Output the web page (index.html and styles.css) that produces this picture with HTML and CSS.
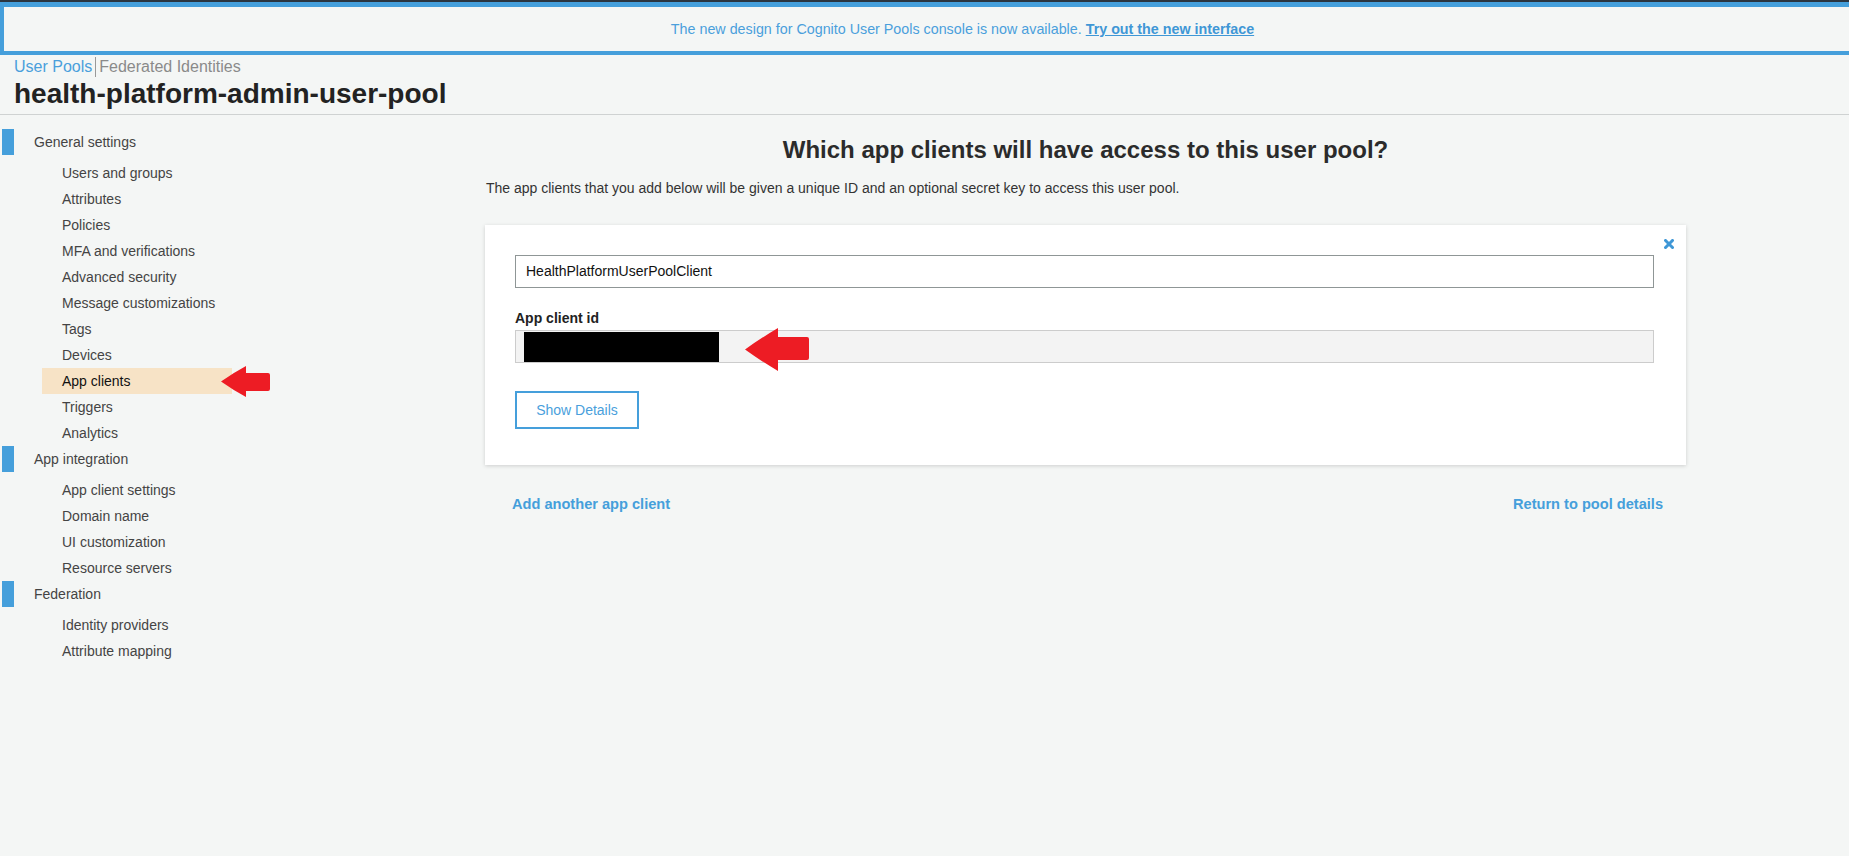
FILE: index.html
```html
<!DOCTYPE html>
<html>
<head>
<meta charset="utf-8">
<title>Cognito User Pool</title>
<link rel="stylesheet" href="styles.css">
</head>
<body>
<div class="topstrip"></div>
<div class="banner">The new design for Cognito User Pools console is now available. <a class="banner-link">Try out the new interface</a></div>
<header class="pagehead">
  <div class="crumbs"><a class="crumb-active">User Pools</a><span class="crumb-sep">Federated Identities</span></div>
  <h1 class="pool-title">health-platform-admin-user-pool</h1>
</header>
<div class="layout">
  <nav class="sidebar">
    <div class="group-head">General settings</div>
    <ul class="sub-list">
      <li class="sub-item">Users and groups</li>
      <li class="sub-item">Attributes</li>
      <li class="sub-item">Policies</li>
      <li class="sub-item">MFA and verifications</li>
      <li class="sub-item">Advanced security</li>
      <li class="sub-item">Message customizations</li>
      <li class="sub-item">Tags</li>
      <li class="sub-item">Devices</li>
      <li class="sub-item active">App clients
        <svg class="side-arrow" width="49" height="31" viewBox="0 0 49 31"><path d="M0 15.5 Q12 7 25 0 L25 7 L47 7 Q49 7 49 9 L49 23 Q49 25 47 25 L25 25 L25 31 Q12 24 0 15.5 Z" fill="#ed1c24"/></svg>
      </li>
      <li class="sub-item">Triggers</li>
      <li class="sub-item">Analytics</li>
    </ul>
    <div class="group-head">App integration</div>
    <ul class="sub-list">
      <li class="sub-item">App client settings</li>
      <li class="sub-item">Domain name</li>
      <li class="sub-item">UI customization</li>
      <li class="sub-item">Resource servers</li>
    </ul>
    <div class="group-head">Federation</div>
    <ul class="sub-list">
      <li class="sub-item">Identity providers</li>
      <li class="sub-item">Attribute mapping</li>
    </ul>
  </nav>
  <main class="content">
    <h2 class="content-title">Which app clients will have access to this user pool?</h2>
    <p class="content-intro">The app clients that you add below will be given a unique ID and an optional secret key to access this user pool.</p>
    <section class="card">
      <svg class="card-close" width="10" height="10" viewBox="0 0 10 10"><path d="M1.5 1.5 L8.5 8.5 M8.5 1.5 L1.5 8.5" stroke="#3f97d6" stroke-width="3" stroke-linecap="square"/></svg>
      <div class="name-input">HealthPlatformUserPoolClient</div>
      <div class="field-label">App client id</div>
      <div class="id-field">
        <div class="redacted"></div>
        <svg class="card-arrow" width="64" height="43" viewBox="0 0 64 43"><path d="M0 21.5 Q16 10 33 0 L33 9 L62 9 Q64 9 64 11 L64 30 Q64 32 62 32 L33 32 L33 43 Q16 33 0 21.5 Z" fill="#ed1c24"/></svg>
      </div>
      <button class="details-btn">Show Details</button>
    </section>
    <div class="link-row">
      <a class="action-link">Add another app client</a>
      <a class="action-link">Return to pool details</a>
    </div>
  </main>
</div>
</body>
</html>
```
FILE: styles.css
```css
html, body {
  margin: 0;
  padding: 0;
  background: #f4f6f5;
  font-family: "Liberation Sans", Arial, sans-serif;
  color: #444;
  height: 100%;
}

.topstrip {
  height: 2px;
  background: #2b3540;
}

.banner {
  height: 44px;
  line-height: 44px;
  border-top: 5px solid #459fdb;
  border-left: 4px solid #459fdb;
  border-bottom: 4px solid #459fdb;
  text-align: center;
  font-size: 14.3px;
  color: #4a9fdc;
  padding-left: 72px;
}

.banner-link {
  font-weight: bold;
  text-decoration: underline;
  color: #3f97d6;
}

.pagehead {
  padding: 2px 14px 4px 14px;
  border-bottom: 1px solid #cfd2d2;
}

.crumbs {
  font-size: 16px;
  line-height: 20px;
  display: flex;
}

.crumb-active {
  color: #4a9fdc;
  padding-right: 3px;
}

.crumb-sep {
  color: #8a8a8a;
  border-left: 1px solid #999;
  padding-left: 3px;
}

.pool-title {
  margin: 1px 0 0 0;
  font-size: 28px;
  line-height: 32px;
  font-weight: bold;
  color: #222;
}

.layout {
  display: grid;
  grid-template-columns: 485px 1201px;
}

.sidebar {
  padding-top: 14px;
  font-size: 14px;
}

.group-head {
  height: 26px;
  line-height: 26px;
  margin-left: 2px;
  border-left: 12px solid #459fdb;
  padding-left: 20px;
  color: #444;
}

.sub-list {
  list-style: none;
  margin: 5px 0 0 0;
  padding: 0;
}

.sub-item {
  position: relative;
  height: 26px;
  line-height: 27px;
  margin-left: 42px;
  width: 190px;
  padding-left: 20px;
  box-sizing: border-box;
  color: #444;
}

.sub-item.active {
  background: #f7e3c6;
  color: #111;
}

.side-arrow {
  position: absolute;
  left: 179px;
  top: -2px;
}

.content-title {
  margin: 21px 0 0 0;
  font-size: 24px;
  line-height: 28px;
  font-weight: bold;
  text-align: center;
  color: #2b2b2b;
}

.content-intro {
  margin: 14px 0 0 1px;
  font-size: 14px;
  line-height: 20px;
  color: #333;
}

.card {
  position: relative;
  margin-top: 27px;
  background: #fff;
  box-shadow: 0 1px 4px rgba(0, 0, 0, 0.16);
  padding: 30px 32px 36px 30px;
}

.card-close {
  position: absolute;
  top: 14px;
  right: 12px;
}

.name-input {
  height: 33px;
  line-height: 31px;
  box-sizing: border-box;
  border: 1px solid #8f9696;
  padding-left: 10px;
  font-size: 14px;
  color: #111;
  background: #fff;
}

.field-label {
  margin-top: 21px;
  font-size: 14px;
  line-height: 18px;
  font-weight: bold;
  color: #222;
}

.id-field {
  position: relative;
  margin-top: 3px;
  height: 33px;
  box-sizing: border-box;
  border: 1px solid #cccccc;
  background: #f3f3f3;
  padding: 1px 8px;
}

.redacted {
  width: 195px;
  height: 30px;
  background: #000;
}

.card-arrow {
  position: absolute;
  left: 229px;
  top: -3px;
}

.details-btn {
  display: block;
  margin-top: 28px;
  width: 124px;
  height: 38px;
  border: 2px solid #459fdb;
  background: #fff;
  color: #4a9fdc;
  font-family: "Liberation Sans", Arial, sans-serif;
  font-size: 14px;
  padding: 0;
}

.link-row {
  display: flex;
  justify-content: space-between;
  margin-top: 29px;
  padding: 0 23px 0 27px;
  line-height: 20px;
}

.action-link {
  font-size: 14.6px;
  font-weight: bold;
  color: #459fdb;
}
```
